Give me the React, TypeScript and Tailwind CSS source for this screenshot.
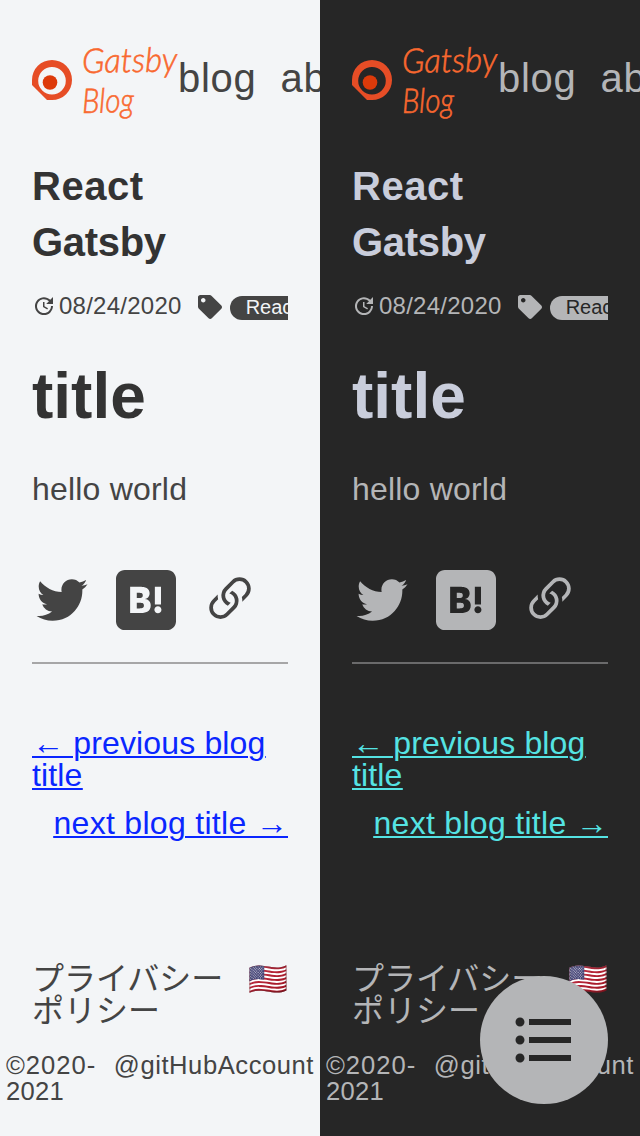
import { RiTwitterFill } from "react-icons/ri";
import { SiHatenabookmark } from "react-icons/si";
import { BsLink45Deg } from "react-icons/bs";
import { MdFormatListBulleted, MdUpdate } from "react-icons/md";
import { FaTag } from "react-icons/fa";

type Theme = {
  page: string;
  heading: string;
  pill: string;
  rule: string;
  link: string;
};

const light: Theme = {
  page: "bg-[#f3f5f7] text-[#444444]",
  heading: "text-[#333333]",
  pill: "bg-[#444444] text-[#f3f5f7]",
  rule: "bg-[#a6a6a7]",
  link: "text-[#0a26ff]",
};

const dark: Theme = {
  page: "bg-[#262626] text-[#b4b5b7]",
  heading: "text-[#c9cddb]",
  pill: "bg-[#b4b5b7] text-[#262626]",
  rule: "bg-[#6a6a6b]",
  link: "text-[#55e3e3]",
};

function Logo() {
  return (
    <svg viewBox="0 0 40 40" className="size-10 shrink-0">
      <path
        fillRule="evenodd"
        fill="#e64d26"
        d="M20 0A20 20 0 1 1 20 40H15L0 25V20A20 20 0 0 1 20 0ZM20 7A13.8 13.8 0 1 0 20 34.6A13.8 13.8 0 0 0 20 7Z"
      />
      <circle cx="18" cy="22.5" r="7.3" fill="#dd3a0a" />
    </svg>
  );
}

function Page({ theme, menu }: { theme: Theme; menu?: boolean }) {
  return (
    <div className={`relative flex h-[1136px] w-80 flex-col overflow-hidden ${theme.page}`}>
      <header className="flex h-40 shrink-0 items-center pl-8">
        <Logo />
        <div className="ml-2.5 w-24 shrink-0 font-['Lato',cursive] text-[34px] leading-10 font-light text-[#f9682f] italic [-webkit-text-stroke:0.6px_#f9682f]">
          <div className="origin-left scale-x-[.97] -rotate-1 whitespace-nowrap">Gatsby</div>
          <div className="origin-left scale-x-[.87] -rotate-1 whitespace-nowrap">Blog</div>
        </div>
        <nav className="flex gap-6 pb-1 text-[40px] leading-10 tracking-[0.7px]">
          <a>blog</a>
          <a>about</a>
        </nav>
      </header>
      <main className="flex flex-col px-8">
        <h1 className={`-mt-0.5 mb-0.5 w-40 text-[40px] leading-14 font-bold ${theme.heading}`}>
          <span className="tracking-[0.5px]">React</span>{" "}
          <span className="tracking-[-0.3px]">Gatsby</span>
        </h1>
        <div className="mt-5 flex h-7 items-center overflow-hidden text-2xl whitespace-nowrap">
          <MdUpdate className="size-6 shrink-0" />
          <span className="ml-[3px] tracking-[0.25px]">08/24/2020</span>
          <FaTag className="mt-0.5 ml-4 size-6 shrink-0" />
          <span className={`mt-1 ml-2 h-6 shrink-0 rounded-full px-4 text-[20px] leading-[23px] ${theme.pill}`}>React</span>
        </div>
        <h2 className={`mt-9 h-20 text-[64px] leading-20 font-bold ${theme.heading}`}>title</h2>
        <p className="mt-[37px] h-8 text-[32px] leading-8 tracking-[0.2px]">hello world</p>
        <div className="mt-[65px] flex gap-6">
          <RiTwitterFill className="size-[60px]" />
          <SiHatenabookmark className="size-[60px]" />
          <BsLink45Deg className="size-[60px]" />
        </div>
        <div className={`mt-8 h-0.5 ${theme.rule}`} />
        <nav className={`mt-[63px] flex flex-col gap-4 text-[32px] leading-8 underline decoration-2 underline-offset-[2px] ${theme.link}`}>
          <a className="tracking-[0.15px]">← previous blog title</a>
          <a className="self-end tracking-[0.3px]">next blog title →</a>
        </nav>
      </main>
      <footer className="mt-[124px]">
        <div className="flex justify-between px-8 font-['Liberation_Sans','Noto_Sans_CJK_JP',sans-serif] text-[32px] leading-8">
          <a className="w-48">プライバシーポリシー</a>
          <span className="whitespace-nowrap">🇺🇸</span>
        </div>
        <div className="mt-[25px] flex justify-between pr-1.5 pl-1.5 text-[25.6px] leading-[26px]">
          <span className="w-[92px]">
            <span className="tracking-[1px]">©2020-</span>
            <br />
            <span className="tracking-[0.3px]">2021</span>
          </span>
          <a className="tracking-[0.55px]">@gitHubAccount</a>
        </div>
      </footer>
      {menu && (
        <button className={`absolute right-8 bottom-8 flex size-32 items-center justify-center rounded-full ${theme.pill}`}>
          <MdFormatListBulleted className="size-[72px]" />
        </button>
      )}
    </div>
  );
}

export default function App() {
  return (
    <div className="flex w-[640px] font-['Liberation_Sans',sans-serif]">
      <Page theme={light} />
      <Page theme={dark} menu />
    </div>
  );
}
